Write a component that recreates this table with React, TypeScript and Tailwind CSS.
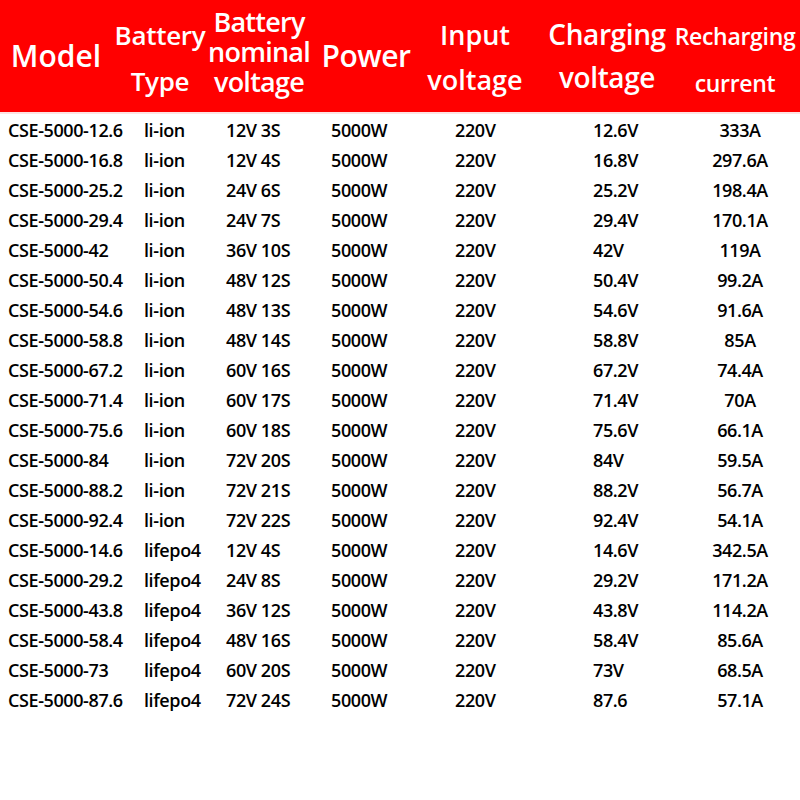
const rows: string[][] = [
  ['CSE-5000-12.6', 'li-ion', '12V 3S', '5000W', '220V', '12.6V', '333A'],
  ['CSE-5000-16.8', 'li-ion', '12V 4S', '5000W', '220V', '16.8V', '297.6A'],
  ['CSE-5000-25.2', 'li-ion', '24V 6S', '5000W', '220V', '25.2V', '198.4A'],
  ['CSE-5000-29.4', 'li-ion', '24V 7S', '5000W', '220V', '29.4V', '170.1A'],
  ['CSE-5000-42', 'li-ion', '36V 10S', '5000W', '220V', '42V', '119A'],
  ['CSE-5000-50.4', 'li-ion', '48V 12S', '5000W', '220V', '50.4V', '99.2A'],
  ['CSE-5000-54.6', 'li-ion', '48V 13S', '5000W', '220V', '54.6V', '91.6A'],
  ['CSE-5000-58.8', 'li-ion', '48V 14S', '5000W', '220V', '58.8V', '85A'],
  ['CSE-5000-67.2', 'li-ion', '60V 16S', '5000W', '220V', '67.2V', '74.4A'],
  ['CSE-5000-71.4', 'li-ion', '60V 17S', '5000W', '220V', '71.4V', '70A'],
  ['CSE-5000-75.6', 'li-ion', '60V 18S', '5000W', '220V', '75.6V', '66.1A'],
  ['CSE-5000-84', 'li-ion', '72V 20S', '5000W', '220V', '84V', '59.5A'],
  ['CSE-5000-88.2', 'li-ion', '72V 21S', '5000W', '220V', '88.2V', '56.7A'],
  ['CSE-5000-92.4', 'li-ion', '72V 22S', '5000W', '220V', '92.4V', '54.1A'],
  ['CSE-5000-14.6', 'lifepo4', '12V 4S', '5000W', '220V', '14.6V', '342.5A'],
  ['CSE-5000-29.2', 'lifepo4', '24V 8S', '5000W', '220V', '29.2V', '171.2A'],
  ['CSE-5000-43.8', 'lifepo4', '36V 12S', '5000W', '220V', '43.8V', '114.2A'],
  ['CSE-5000-58.4', 'lifepo4', '48V 16S', '5000W', '220V', '58.4V', '85.6A'],
  ['CSE-5000-73', 'lifepo4', '60V 20S', '5000W', '220V', '73V', '68.5A'],
  ['CSE-5000-87.6', 'lifepo4', '72V 24S', '5000W', '220V', '87.6', '57.1A'],
]

export default function App() {
  return (
    <div className="w-[800px] h-[800px] bg-white font-['Open_Sans',sans-serif] overflow-hidden">
      {/* header band */}
      <div className="flex h-[114px] bg-[#ff0000] text-white font-[550] border-b-2 border-[#fde3e3]">
        <div className="w-[112px] flex flex-col justify-center items-center text-[30px] leading-[40px]">
          Model
        </div>
        <div className="w-[96px] flex flex-col justify-center items-center text-[26px] leading-[46px] tracking-[-0.3px] pt-[3px]">
          <span>Battery</span>
          <span>Type</span>
        </div>
        <div className="w-[102px] flex flex-col justify-center items-center text-[27px] leading-[30px] tracking-[-0.75px] pb-[8px]">
          <span>Battery</span>
          <span>nominal</span>
          <span>voltage</span>
        </div>
        <div className="w-[112px] flex flex-col justify-center items-center text-[30px] leading-[40px] tracking-[-0.5px]">
          Power
        </div>
        <div className="w-[106px] flex flex-col justify-center items-center text-[27px] leading-[45px] pt-[2px]">
          <span>Input</span>
          <span>voltage</span>
        </div>
        <div className="w-[158px] flex flex-col justify-center items-center text-[28px] leading-[43px] tracking-[-0.4px]">
          <span>Charging</span>
          <span>voltage</span>
        </div>
        <div className="w-[98px] flex flex-col justify-center items-center text-[23px] leading-[47px] tracking-[-0.3px] pt-[8px]">
          <span className="whitespace-nowrap">Recharging</span>
          <span>current</span>
        </div>
      </div>

      {/* data rows */}
      <div className="pl-[8px] pt-[1px] text-black text-[18px] font-semibold tracking-[-0.4px]">
        {rows.map((r, i) => (
          <div
            key={i}
            className="grid grid-cols-[136px_82px_105px_124px_138px_97px_100px] h-[30px] items-center leading-[30px]"
          >
            <span>{r[0]}</span>
            <span>{r[1]}</span>
            <span>{r[2]}</span>
            <span>{r[3]}</span>
            <span>{r[4]}</span>
            <span>{r[5]}</span>
            <span className="text-center">{r[6]}</span>
          </div>
        ))}
      </div>
    </div>
  )
}
